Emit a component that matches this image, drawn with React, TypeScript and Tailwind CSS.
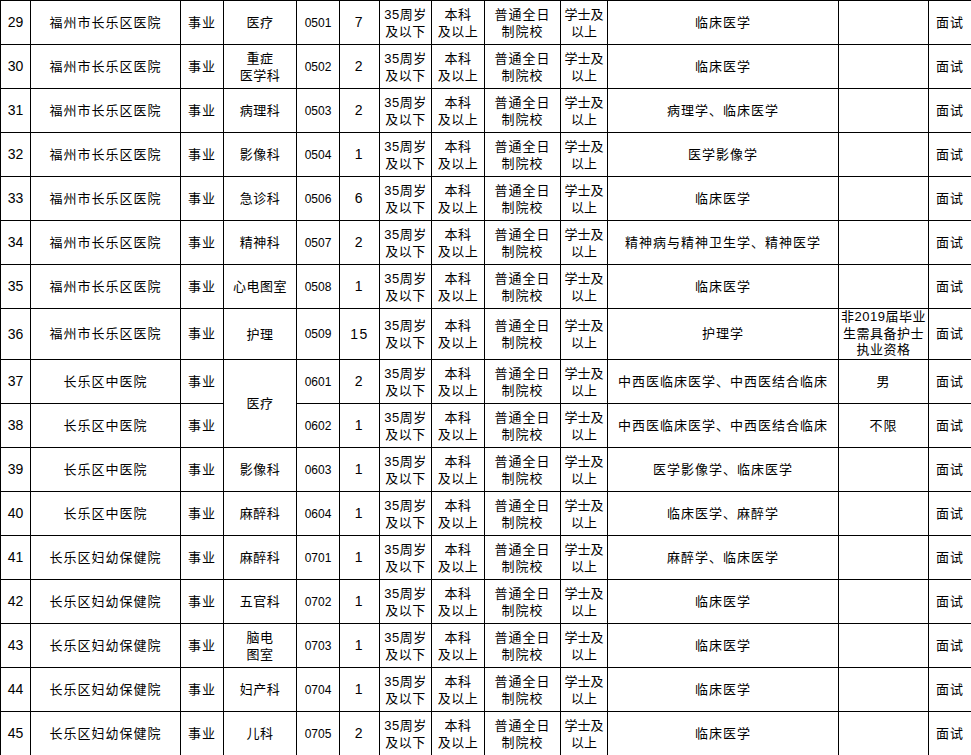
type Row = {
  no: number
  unit: string
  dept?: string[]
  deptSpan?: number
  code: string
  count: string
  major: string
  remark?: string[]
}

const rows: Row[] = [
  { no: 29, unit: '福州市长乐区医院', dept: ['医疗'], code: '0501', count: '7', major: '临床医学' },
  { no: 30, unit: '福州市长乐区医院', dept: ['重症', '医学科'], code: '0502', count: '2', major: '临床医学' },
  { no: 31, unit: '福州市长乐区医院', dept: ['病理科'], code: '0503', count: '2', major: '病理学、临床医学' },
  { no: 32, unit: '福州市长乐区医院', dept: ['影像科'], code: '0504', count: '1', major: '医学影像学' },
  { no: 33, unit: '福州市长乐区医院', dept: ['急诊科'], code: '0506', count: '6', major: '临床医学' },
  { no: 34, unit: '福州市长乐区医院', dept: ['精神科'], code: '0507', count: '2', major: '精神病与精神卫生学、精神医学' },
  { no: 35, unit: '福州市长乐区医院', dept: ['心电图室'], code: '0508', count: '1', major: '临床医学' },
  { no: 36, unit: '福州市长乐区医院', dept: ['护理'], code: '0509', count: '15', major: '护理学', remark: ['非2019届毕业', '生需具备护士', '执业资格'] },
  { no: 37, unit: '长乐区中医院', dept: ['医疗'], deptSpan: 2, code: '0601', count: '2', major: '中西医临床医学、中西医结合临床', remark: ['男'] },
  { no: 38, unit: '长乐区中医院', code: '0602', count: '1', major: '中西医临床医学、中西医结合临床', remark: ['不限'] },
  { no: 39, unit: '长乐区中医院', dept: ['影像科'], code: '0603', count: '1', major: '医学影像学、临床医学' },
  { no: 40, unit: '长乐区中医院', dept: ['麻醉科'], code: '0604', count: '1', major: '临床医学、麻醉学' },
  { no: 41, unit: '长乐区妇幼保健院', dept: ['麻醉科'], code: '0701', count: '1', major: '麻醉学、临床医学' },
  { no: 42, unit: '长乐区妇幼保健院', dept: ['五官科'], code: '0702', count: '1', major: '临床医学' },
  { no: 43, unit: '长乐区妇幼保健院', dept: ['脑电', '图室'], code: '0703', count: '1', major: '临床医学' },
  { no: 44, unit: '长乐区妇幼保健院', dept: ['妇产科'], code: '0704', count: '1', major: '临床医学' },
  { no: 45, unit: '长乐区妇幼保健院', dept: ['儿科'], code: '0705', count: '2', major: '临床医学' },
]

// shared cell style
const cell = 'border border-black text-center align-middle p-0 overflow-hidden whitespace-nowrap'

function Lines({ lines }: { lines: string[] }) {
  return (
    <div className="leading-[17px]">
      {lines.map((l) => (
        <div key={l}>{l}</div>
      ))}
    </div>
  )
}

export default function App() {
  return (
    <div className="w-[971px] h-[755px] bg-white overflow-hidden">
      <table className='table-fixed border-collapse w-[971px] text-[13px] tracking-[0.5px] text-black font-["Liberation_Sans","Noto_Sans_CJK_SC",sans-serif]'>
        <colgroup>
          <col className="w-[30px]" />
          <col className="w-[150px]" />
          <col className="w-[43px]" />
          <col className="w-[73px]" />
          <col className="w-[43px]" />
          <col className="w-[40px]" />
          <col className="w-[52px]" />
          <col className="w-[53px]" />
          <col className="w-[76px]" />
          <col className="w-[47px]" />
          <col className="w-[231px]" />
          <col className="w-[90px]" />
          <col className="w-[43px]" />
        </colgroup>
        <tbody>
          {rows.map((r) => (
            <tr key={r.no} className={r.no === 36 ? 'h-[51px]' : 'h-[44px]'}>
              <td className={`${cell} text-[14px] tracking-normal`}>{r.no}</td>
              <td className={`${cell} tracking-[1px]`}>{r.unit}</td>
              <td className={`${cell} tracking-[1px]`}>事业</td>
              {r.dept && (
                <td className={cell} rowSpan={r.deptSpan ?? 1}>
                  <Lines lines={r.dept} />
                </td>
              )}
              <td className={`${cell} text-[12px] tracking-normal`}>{r.code}</td>
              <td className={`${cell} text-[14px] tracking-[1.5px]`}>{r.count}</td>
              <td className={cell}>
                <Lines lines={['35周岁', '及以下']} />
              </td>
              <td className={cell}>
                <Lines lines={['本科', '及以上']} />
              </td>
              <td className={`${cell} tracking-[1px]`}>
                <Lines lines={['普通全日', '制院校']} />
              </td>
              <td className={`${cell} tracking-normal`}>
                <Lines lines={['学士及', '以上']} />
              </td>
              <td className={`${cell} tracking-[1px]`}>{r.major}</td>
              <td className={cell}>
                {r.remark && (
                  <div className={r.remark.length > 1 ? 'leading-[16.5px] tracking-[0.5px]' : 'tracking-[1px]'}>
                    {r.remark.map((l) => (
                      <div key={l}>{l}</div>
                    ))}
                  </div>
                )}
              </td>
              <td className={`${cell} tracking-[1px]`}>面试</td>
            </tr>
          ))}
        </tbody>
      </table>
    </div>
  )
}
